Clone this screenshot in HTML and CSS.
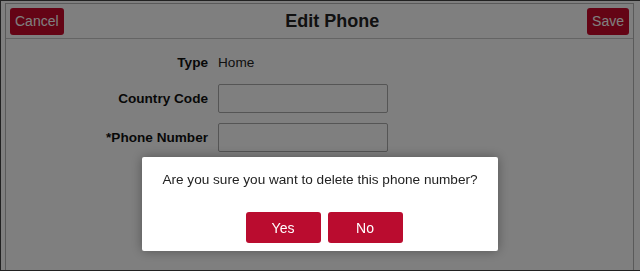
FILE: index.html
```html
<!DOCTYPE html>
<html lang="en">
<head>
  <meta charset="UTF-8">
  <title>Edit Phone</title>
  <link rel="stylesheet" href="styles.css">
</head>
<body>

  <div class="frame">
    <div class="panel">
      <div class="header">
        <button class="head-btn">Cancel</button>
        <h1>Edit Phone</h1>
        <button class="head-btn">Save</button>
      </div>

      <div class="form">
        <div class="row row-type">
          <span class="label">Type</span>
          <span class="value">Home</span>
        </div>
        <div class="row">
          <label class="label" for="cc">Country Code</label>
          <input id="cc" type="text">
        </div>
        <div class="row">
          <label class="label" for="phone">*Phone Number</label>
          <input id="phone" type="text">
        </div>
      </div>
    </div>
  </div>

  <div class="overlay">
    <div class="dialog">
      <p>Are you sure you want to delete this phone number?</p>
      <div class="dialog-buttons">
        <button class="btn">Yes</button>
        <button class="btn">No</button>
      </div>
    </div>
  </div>

</body>
</html>
```

FILE: styles.css
```css
html, body { margin:0; padding:0; width:100%; height:100%; font-family: "Liberation Sans", Arial, sans-serif; background: #fff; }
.frame { width:640px; height:271px; box-sizing: border-box; border: 1px solid #444; border-right: none; padding: 2px 6px 0 4px; overflow: hidden; }
.panel { height: 100%; border: 1px solid #b4b4b4; border-bottom: none; box-sizing: border-box; }
.header { display: flex; align-items: center; justify-content: space-between; height: 34px; padding: 0 4px; border-bottom: 1px solid #c8c8c8; }
.header h1 { margin: 0 0 0 14px; font-size: 18px; color: #222; font-weight: bold; }
.head-btn { font-family: inherit; font-size: 14px; height: 27px; padding: 0 5px; border: none; border-radius: 3px; background: #c9082a; color: #fff; }
.form { padding-top: 11px; }
.row { display: flex; align-items: center; margin-bottom: 10px; }
.row-type { height: 24px; margin-bottom: 10px; }
.label { width: 202px; text-align: right; font-weight: bold; font-size: 13.6px; color: #111; padding-right: 10px; }
.value { font-size: 13.6px; color: #222; }
input { width: 170px; height: 29px; box-sizing: border-box; border: 1px solid #aaa; border-radius: 2px; background: #fff; font-size: 14px; }
.overlay { position: fixed; inset: 0; background: rgba(0,0,0,0.5); }
.dialog { position: absolute; left: 142px; top: 157px; width: 356px; height: 94px; box-sizing: border-box; background: #fff; border-radius: 2px; box-shadow: 0 0 12px rgba(0,0,0,0.35); text-align: center; }
.dialog p { margin: 15px 0 0; font-size: 13.6px; color: #222; }
.dialog-buttons { display: flex; justify-content: center; gap: 7px; margin-top: 25px; padding-left: 8px; }
.btn { width: 75px; height: 31px; font-family: inherit; font-size: 14px; border: none; border-radius: 3px; background: #ba0c2f; color: #fff; }
```
